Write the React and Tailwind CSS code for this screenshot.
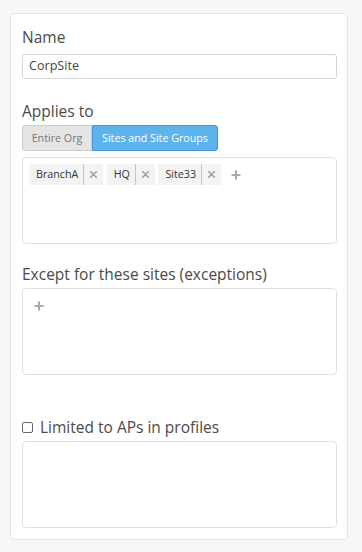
import React from "react";

function XIcon() {
  return (
    <svg width="7" height="7" viewBox="0 0 7 7" className="block">
      <path d="M0.5 0.5 L6.5 6.5 M6.5 0.5 L0.5 6.5" stroke="#9a9a9a" strokeWidth="1.4" strokeLinecap="round" />
    </svg>
  );
}

function PlusIcon() {
  return (
    <svg width="10" height="10" viewBox="0 0 10 10" className="block">
      <path d="M5 0.5 V9.5 M0.5 5 H9.5" stroke="#a9a9a9" strokeWidth="2" />
    </svg>
  );
}

function Tag({ label }) {
  return (
    <div className="flex items-stretch h-[21px] bg-[#f3f3f3] text-[10.7px] text-[#333]">
      <span className="pl-[7px] pr-[5px] flex items-center border-r border-[#c4c4c4]">{label}</span>
      <span className="w-[19px] flex items-center justify-center"><XIcon /></span>
    </div>
  );
}

export default function App() {
  return (
    <div className="min-h-[552px] bg-[#f7f7f7] pt-[13px] px-[10px] pb-[12px]" style={{ fontFamily: '"Open Sans", sans-serif' }}>
      <div className="w-[338px] h-[527px] bg-white border border-[#e3e3e3] rounded-[4px] px-[11px] pt-[12px]">
        <div className="text-[15.5px] leading-[22px] text-[#4a4a4a]">Name</div>
        <div className="mt-[6px] h-[25px] w-[315px] border border-[#d6d6d6] rounded-[3px] flex items-center px-[6px] text-[12.6px] text-[#444]">CorpSite</div>

        <div className="mt-[21px] text-[15.5px] leading-[22px] text-[#4a4a4a]">Applies to</div>
        <div className="mt-[3px] flex h-[26px] text-[10.7px]">
          <div className="w-[70px] flex items-center justify-center bg-[#e5e5e5] border border-[#cdcdcd] rounded-l-[3px] text-[#777]">Entire Org</div>
          <div className="w-[126px] flex items-center justify-center bg-[#5db3ec] border border-[#4497d6] rounded-r-[3px] text-white">Sites and Site Groups</div>
        </div>
        <div className="mt-[6px] h-[87px] w-[315px] border border-[#e0e0e0] rounded-[4px] px-[6px] pt-[6px]">
          <div className="flex items-center gap-[3.5px]">
            <Tag label="BranchA" />
            <Tag label="HQ" />
            <Tag label="Site33" />
            <span className="ml-[6px]"><PlusIcon /></span>
          </div>
        </div>

        <div className="mt-[19px] text-[15.5px] leading-[22px] text-[#4a4a4a]">Except for these sites (exceptions)</div>
        <div className="mt-[3px] h-[87px] w-[315px] border border-[#e0e0e0] rounded-[4px] pl-[11px] pt-[12px]">
          <PlusIcon />
        </div>

        <div className="mt-[41px] flex items-center text-[15.5px] leading-[22px] text-[#4a4a4a]">
          <span className="w-[11px] h-[11px] border border-[#666] rounded-[2px] inline-block"></span>
          <span className="ml-[7px]">Limited to APs in profiles</span>
        </div>
        <div className="mt-[3px] h-[87px] w-[315px] border border-[#e0e0e0] rounded-[4px]"></div>
      </div>
    </div>
  );
}
